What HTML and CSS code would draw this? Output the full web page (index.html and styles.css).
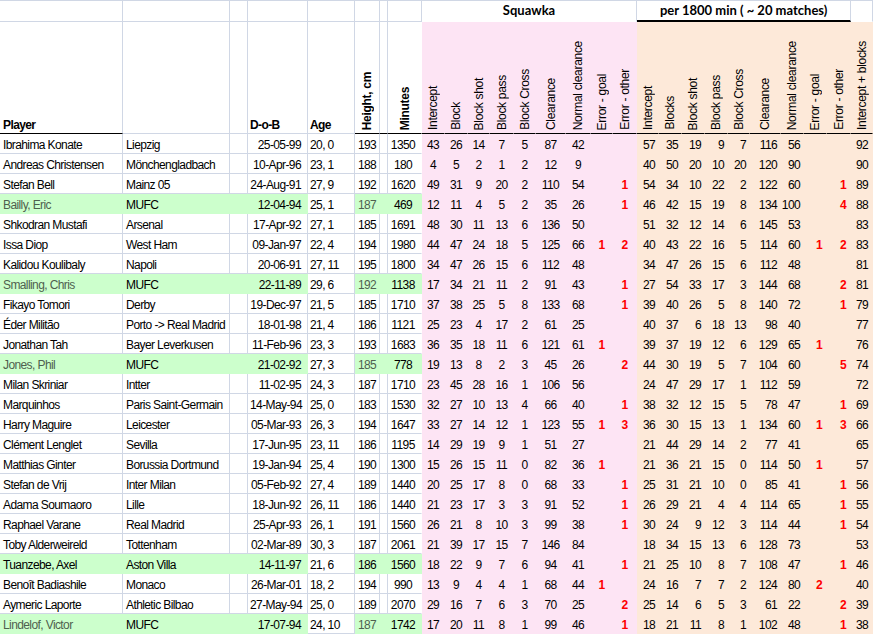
FILE: index.html
```html
<!DOCTYPE html>
<html>
<head>
<meta charset="utf-8">
<link rel="stylesheet" href="styles.css">
</head>
<body>
<table class="sheet">
<colgroup>
<col class="w-a"><col class="w-b"><col class="w-c"><col class="w-d"><col class="w-e"><col class="w-f"><col class="w-g"><col class="w-h">
<col class="w23"><col class="w23"><col class="w22"><col class="w24"><col class="w22"><col class="w30"><col class="w25"><col class="w22"><col class="w24">
<col class="w22"><col class="w23"><col class="w23"><col class="w23"><col class="w22"><col class="w31"><col class="w23"><col class="w23"><col class="w24"><col class="w22">
</colgroup>
<tr class="h1"><td></td><td></td><td></td><td></td><td></td><td></td><td></td><td></td><td colspan="9" class="sq">Squawka</td><td colspan="9" class="per">per 1800 min ( ~ 20 matches)</td><td class="last"></td></tr>
<tr class="h2">
<td class="hl">Player</td><td></td><td></td><td class="hl">D-o-B</td><td class="hl">Age</td>
<td class="hv bold"><span class="vt">Height, cm</span></td><td></td><td class="hv bold"><span class="vt">Minutes</span></td>
<td class="hv pk"><span class="vt">Intercept</span></td><td class="hv pk"><span class="vt">Block</span></td><td class="hv pk"><span class="vt">Block shot</span></td><td class="hv pk"><span class="vt">Block pass</span></td><td class="hv pk"><span class="vt">Block Cross</span></td><td class="hv pk"><span class="vt">Clearance</span></td><td class="hv pk"><span class="vt">Normal clearance</span></td><td class="hv pk"><span class="vt">Error - goal</span></td><td class="hv pk"><span class="vt">Error - other</span></td>
<td class="hv pc"><span class="vt">Intercept</span></td><td class="hv pc"><span class="vt">Blocks</span></td><td class="hv pc"><span class="vt">Block shot</span></td><td class="hv pc"><span class="vt">Block pass</span></td><td class="hv pc"><span class="vt">Block Cross</span></td><td class="hv pc"><span class="vt">Clearance</span></td><td class="hv pc"><span class="vt">Normal clearance</span></td><td class="hv pc"><span class="vt">Error - goal</span></td><td class="hv pc"><span class="vt">Error - other</span></td><td class="hv pc"><span class="vt">Intercept + blocks</span></td>
</tr>
<tr class="data"><td>Ibrahima Konate</td><td>Liepzig</td><td></td><td>25-05-99</td><td>20, 0</td><td>193</td><td></td><td>1350</td><td>43</td><td>26</td><td>14</td><td>7</td><td>5</td><td>87</td><td>42</td><td></td><td></td><td>57</td><td>35</td><td>19</td><td>9</td><td>7</td><td>116</td><td>56</td><td></td><td></td><td>92</td></tr>
<tr class="data"><td>Andreas Christensen</td><td>Mönchengladbach</td><td></td><td>10-Apr-96</td><td>23, 1</td><td>188</td><td></td><td>180</td><td>4</td><td>5</td><td>2</td><td>1</td><td>2</td><td>12</td><td>9</td><td></td><td></td><td>40</td><td>50</td><td>20</td><td>10</td><td>20</td><td>120</td><td>90</td><td></td><td></td><td>90</td></tr>
<tr class="data"><td>Stefan Bell</td><td>Mainz 05</td><td></td><td>24-Aug-91</td><td>27, 9</td><td>192</td><td></td><td>1620</td><td>49</td><td>31</td><td>9</td><td>20</td><td>2</td><td>110</td><td>54</td><td></td><td>1</td><td>54</td><td>34</td><td>10</td><td>22</td><td>2</td><td>122</td><td>60</td><td></td><td>1</td><td>89</td></tr>
<tr class="data green dim"><td>Bailly, Eric</td><td>MUFC</td><td></td><td>12-04-94</td><td>25, 1</td><td>187</td><td></td><td>469</td><td>12</td><td>11</td><td>4</td><td>5</td><td>2</td><td>35</td><td>26</td><td></td><td>1</td><td>46</td><td>42</td><td>15</td><td>19</td><td>8</td><td>134</td><td>100</td><td></td><td>4</td><td>88</td></tr>
<tr class="data"><td>Shkodran Mustafi</td><td>Arsenal</td><td></td><td>17-Apr-92</td><td>27, 1</td><td>185</td><td></td><td>1691</td><td>48</td><td>30</td><td>11</td><td>13</td><td>6</td><td>136</td><td>50</td><td></td><td></td><td>51</td><td>32</td><td>12</td><td>14</td><td>6</td><td>145</td><td>53</td><td></td><td></td><td>83</td></tr>
<tr class="data"><td>Issa Diop</td><td>West Ham</td><td></td><td>09-Jan-97</td><td>22, 4</td><td>194</td><td></td><td>1980</td><td>44</td><td>47</td><td>24</td><td>18</td><td>5</td><td>125</td><td>66</td><td>1</td><td>2</td><td>40</td><td>43</td><td>22</td><td>16</td><td>5</td><td>114</td><td>60</td><td>1</td><td>2</td><td>83</td></tr>
<tr class="data"><td>Kalidou Koulibaly</td><td>Napoli</td><td></td><td>20-06-91</td><td>27, 11</td><td>195</td><td></td><td>1800</td><td>34</td><td>47</td><td>26</td><td>15</td><td>6</td><td>112</td><td>48</td><td></td><td></td><td>34</td><td>47</td><td>26</td><td>15</td><td>6</td><td>112</td><td>48</td><td></td><td></td><td>81</td></tr>
<tr class="data green dim"><td>Smalling, Chris</td><td>MUFC</td><td></td><td>22-11-89</td><td>29, 6</td><td>192</td><td></td><td>1138</td><td>17</td><td>34</td><td>21</td><td>11</td><td>2</td><td>91</td><td>43</td><td></td><td>1</td><td>27</td><td>54</td><td>33</td><td>17</td><td>3</td><td>144</td><td>68</td><td></td><td>2</td><td>81</td></tr>
<tr class="data"><td>Fikayo Tomori</td><td>Derby</td><td></td><td>19-Dec-97</td><td>21, 5</td><td>185</td><td></td><td>1710</td><td>37</td><td>38</td><td>25</td><td>5</td><td>8</td><td>133</td><td>68</td><td></td><td>1</td><td>39</td><td>40</td><td>26</td><td>5</td><td>8</td><td>140</td><td>72</td><td></td><td>1</td><td>79</td></tr>
<tr class="data"><td>Éder Militão</td><td>Porto -&gt; Real Madrid</td><td></td><td>18-01-98</td><td>21, 4</td><td>186</td><td></td><td>1121</td><td>25</td><td>23</td><td>4</td><td>17</td><td>2</td><td>61</td><td>25</td><td></td><td></td><td>40</td><td>37</td><td>6</td><td>18</td><td>13</td><td>98</td><td>40</td><td></td><td></td><td>77</td></tr>
<tr class="data"><td>Jonathan Tah</td><td>Bayer Leverkusen</td><td></td><td>11-Feb-96</td><td>23, 3</td><td>193</td><td></td><td>1683</td><td>36</td><td>35</td><td>18</td><td>11</td><td>6</td><td>121</td><td>61</td><td>1</td><td></td><td>39</td><td>37</td><td>19</td><td>12</td><td>6</td><td>129</td><td>65</td><td>1</td><td></td><td>76</td></tr>
<tr class="data green dim"><td>Jones, Phil</td><td>MUFC</td><td></td><td>21-02-92</td><td>27, 3</td><td>185</td><td></td><td>778</td><td>19</td><td>13</td><td>8</td><td>2</td><td>3</td><td>45</td><td>26</td><td></td><td>2</td><td>44</td><td>30</td><td>19</td><td>5</td><td>7</td><td>104</td><td>60</td><td></td><td>5</td><td>74</td></tr>
<tr class="data"><td>Milan Skriniar</td><td>Intter</td><td></td><td>11-02-95</td><td>24, 3</td><td>187</td><td></td><td>1710</td><td>23</td><td>45</td><td>28</td><td>16</td><td>1</td><td>106</td><td>56</td><td></td><td></td><td>24</td><td>47</td><td>29</td><td>17</td><td>1</td><td>112</td><td>59</td><td></td><td></td><td>72</td></tr>
<tr class="data"><td>Marquinhos</td><td>Paris Saint-Germain</td><td></td><td>14-May-94</td><td>25, 0</td><td>183</td><td></td><td>1530</td><td>32</td><td>27</td><td>10</td><td>13</td><td>4</td><td>66</td><td>40</td><td></td><td>1</td><td>38</td><td>32</td><td>12</td><td>15</td><td>5</td><td>78</td><td>47</td><td></td><td>1</td><td>69</td></tr>
<tr class="data"><td>Harry Maguire</td><td>Leicester</td><td></td><td>05-Mar-93</td><td>26, 3</td><td>194</td><td></td><td>1647</td><td>33</td><td>27</td><td>14</td><td>12</td><td>1</td><td>123</td><td>55</td><td>1</td><td>3</td><td>36</td><td>30</td><td>15</td><td>13</td><td>1</td><td>134</td><td>60</td><td>1</td><td>3</td><td>66</td></tr>
<tr class="data"><td>Clément Lenglet</td><td>Sevilla</td><td></td><td>17-Jun-95</td><td>23, 11</td><td>186</td><td></td><td>1195</td><td>14</td><td>29</td><td>19</td><td>9</td><td>1</td><td>51</td><td>27</td><td></td><td></td><td>21</td><td>44</td><td>29</td><td>14</td><td>2</td><td>77</td><td>41</td><td></td><td></td><td>65</td></tr>
<tr class="data"><td>Matthias Ginter</td><td>Borussia Dortmund</td><td></td><td>19-Jan-94</td><td>25, 4</td><td>190</td><td></td><td>1300</td><td>15</td><td>26</td><td>15</td><td>11</td><td>0</td><td>82</td><td>36</td><td>1</td><td></td><td>21</td><td>36</td><td>21</td><td>15</td><td>0</td><td>114</td><td>50</td><td>1</td><td></td><td>57</td></tr>
<tr class="data"><td>Stefan de Vrij</td><td>Inter Milan</td><td></td><td>05-Feb-92</td><td>27, 4</td><td>189</td><td></td><td>1440</td><td>20</td><td>25</td><td>17</td><td>8</td><td>0</td><td>68</td><td>33</td><td></td><td>1</td><td>25</td><td>31</td><td>21</td><td>10</td><td>0</td><td>85</td><td>41</td><td></td><td>1</td><td>56</td></tr>
<tr class="data"><td>Adama Soumaoro</td><td>Lille</td><td></td><td>18-Jun-92</td><td>26, 11</td><td>186</td><td></td><td>1440</td><td>21</td><td>23</td><td>17</td><td>3</td><td>3</td><td>91</td><td>52</td><td></td><td>1</td><td>26</td><td>29</td><td>21</td><td>4</td><td>4</td><td>114</td><td>65</td><td></td><td>1</td><td>55</td></tr>
<tr class="data"><td>Raphael Varane</td><td>Real Madrid</td><td></td><td>25-Apr-93</td><td>26, 1</td><td>191</td><td></td><td>1560</td><td>26</td><td>21</td><td>8</td><td>10</td><td>3</td><td>99</td><td>38</td><td></td><td>1</td><td>30</td><td>24</td><td>9</td><td>12</td><td>3</td><td>114</td><td>44</td><td></td><td>1</td><td>54</td></tr>
<tr class="data"><td>Toby Alderweireld</td><td>Tottenham</td><td></td><td>02-Mar-89</td><td>30, 3</td><td>187</td><td></td><td>2061</td><td>21</td><td>39</td><td>17</td><td>15</td><td>7</td><td>146</td><td>84</td><td></td><td></td><td>18</td><td>34</td><td>15</td><td>13</td><td>6</td><td>128</td><td>73</td><td></td><td></td><td>53</td></tr>
<tr class="data green"><td>Tuanzebe, Axel</td><td>Aston Villa</td><td></td><td>14-11-97</td><td>21, 6</td><td>186</td><td></td><td>1560</td><td>18</td><td>22</td><td>9</td><td>7</td><td>6</td><td>94</td><td>41</td><td></td><td>1</td><td>21</td><td>25</td><td>10</td><td>8</td><td>7</td><td>108</td><td>47</td><td></td><td>1</td><td>46</td></tr>
<tr class="data"><td>Benoît Badiashile</td><td>Monaco</td><td></td><td>26-Mar-01</td><td>18, 2</td><td>194</td><td></td><td>990</td><td>13</td><td>9</td><td>4</td><td>4</td><td>1</td><td>68</td><td>44</td><td>1</td><td></td><td>24</td><td>16</td><td>7</td><td>7</td><td>2</td><td>124</td><td>80</td><td>2</td><td></td><td>40</td></tr>
<tr class="data"><td>Aymeric Laporte</td><td>Athletic Bilbao</td><td></td><td>27-May-94</td><td>25, 0</td><td>189</td><td></td><td>2070</td><td>29</td><td>16</td><td>7</td><td>6</td><td>3</td><td>70</td><td>25</td><td></td><td>2</td><td>25</td><td>14</td><td>6</td><td>5</td><td>3</td><td>61</td><td>22</td><td></td><td>2</td><td>39</td></tr>
<tr class="data green dim"><td>Lindelof, Victor</td><td>MUFC</td><td></td><td>17-07-94</td><td>24, 10</td><td>187</td><td></td><td>1742</td><td>17</td><td>20</td><td>11</td><td>8</td><td>1</td><td>99</td><td>46</td><td></td><td>1</td><td>18</td><td>21</td><td>11</td><td>8</td><td>1</td><td>102</td><td>48</td><td></td><td>1</td><td>38</td></tr>
</table>
</body>
</html>
```
FILE: styles.css
```css
* { box-sizing: border-box; }
body {
  margin: 0;
  background: #fff;
  color: #000;
  font-family: "Liberation Sans", Arial, sans-serif;
  font-size: 12px;
  letter-spacing: -0.6px;
}
.sheet {
  border-collapse: separate;
  border-spacing: 0;
  table-layout: fixed;
  width: 873px;
}
.w-a { width: 123px; }
.w-b { width: 107px; }
.w-c { width: 18px; }
.w-d { width: 60px; }
.w-e { width: 47px; }
.w-f { width: 25px; }
.w-g { width: 8px; }
.w-h { width: 34px; }
.w22 { width: 22px; }
.w23 { width: 23px; }
.w24 { width: 24px; }
.w25 { width: 25px; }
.w30 { width: 30px; }
.w31 { width: 31px; }

.sheet td {
  border-right: 1px solid #d0d7e5;
  border-bottom: 1px solid #d0d7e5;
  padding: 3px 2px 0;
  line-height: 16px;
  white-space: nowrap;
  overflow: hidden;
  vertical-align: top;
}

/* header row 1 */
.h1 { height: 22px; }
.h1 td {
  border-top: 1px solid #d0d7e5;
  padding: 0;
  line-height: 19px;
  text-align: center;
  font-family: Lato, "Liberation Sans", sans-serif;
  font-weight: 700;
  font-size: 13px;
  letter-spacing: 0;
}
.h1 td.sq { border-bottom-color: transparent; }
.h1 td.per { border-bottom: 2px solid #000; }
.h1 td.last { border-bottom-color: transparent; }

/* header row 2 */
.h2 { height: 112px; }
.h2 td {
  vertical-align: bottom;
  padding: 0 2px 0;
  font-weight: bold;
}
.h2 td:nth-child(1),
.h2 td:nth-child(n+6) { border-bottom-color: #000; }
.h2 td.hl { padding-left: 3px; }
.h2 td:nth-child(4), .h2 td:nth-child(5) { padding-left: 2px; }
.h2 td:nth-child(8) { border-right-color: transparent; }
.h2 td.hv {
  text-align: center;
  line-height: 0;
  padding: 0 0 3px;
}
.h2 td.pk { background: #fde4f4; border-right-color: transparent; font-weight: normal; }
.h2 td.pc { background: #fde9d9; border-right-color: transparent; font-weight: normal; }
.vt {
  display: inline-block;
  writing-mode: vertical-rl;
  transform: rotate(180deg);
  line-height: 14px;
  white-space: nowrap;
  vertical-align: bottom;
  letter-spacing: -0.3px;
}

/* data rows */
.data { height: 20px; }
.data td:nth-child(1) { padding-left: 3px; }
.data td:nth-child(2) { padding-left: 3px; }
.data td:nth-child(4) { text-align: right; padding-right: 6px; }
.data td:nth-child(5) { padding-left: 2px; }
.data td:nth-child(6) { text-align: center; padding: 3px 0 0; }
.data td:nth-child(8) { text-align: center; padding: 3px 3px 0 0; border-right-color: transparent; }
.data td:nth-child(n+9):nth-child(-n+17) {
  background: #fde4f4;
  border-color: transparent;
  text-align: center;
  padding: 3px 0 0;
}
.data td:nth-child(16), .data td:nth-child(17) { padding-right: 2px; }
.data td:nth-child(n+18) {
  background: #fde9d9;
  border-color: transparent;
  text-align: right;
  padding: 3px 3px 0 0;
}
.data td:nth-child(25), .data td:nth-child(26), .data td:nth-child(27) { padding-right: 4px; }
.data td:nth-child(16), .data td:nth-child(17),
.data td:nth-child(25), .data td:nth-child(26) {
  color: #ff0000;
  font-weight: bold;
}
.green td:nth-child(-n+4),
.green td:nth-child(n+6):nth-child(-n+8) {
  background: #ccffcc;
  border-color: transparent;
}
.dim td:nth-child(1), .dim td:nth-child(6) { color: #4f5f4f; }
```
